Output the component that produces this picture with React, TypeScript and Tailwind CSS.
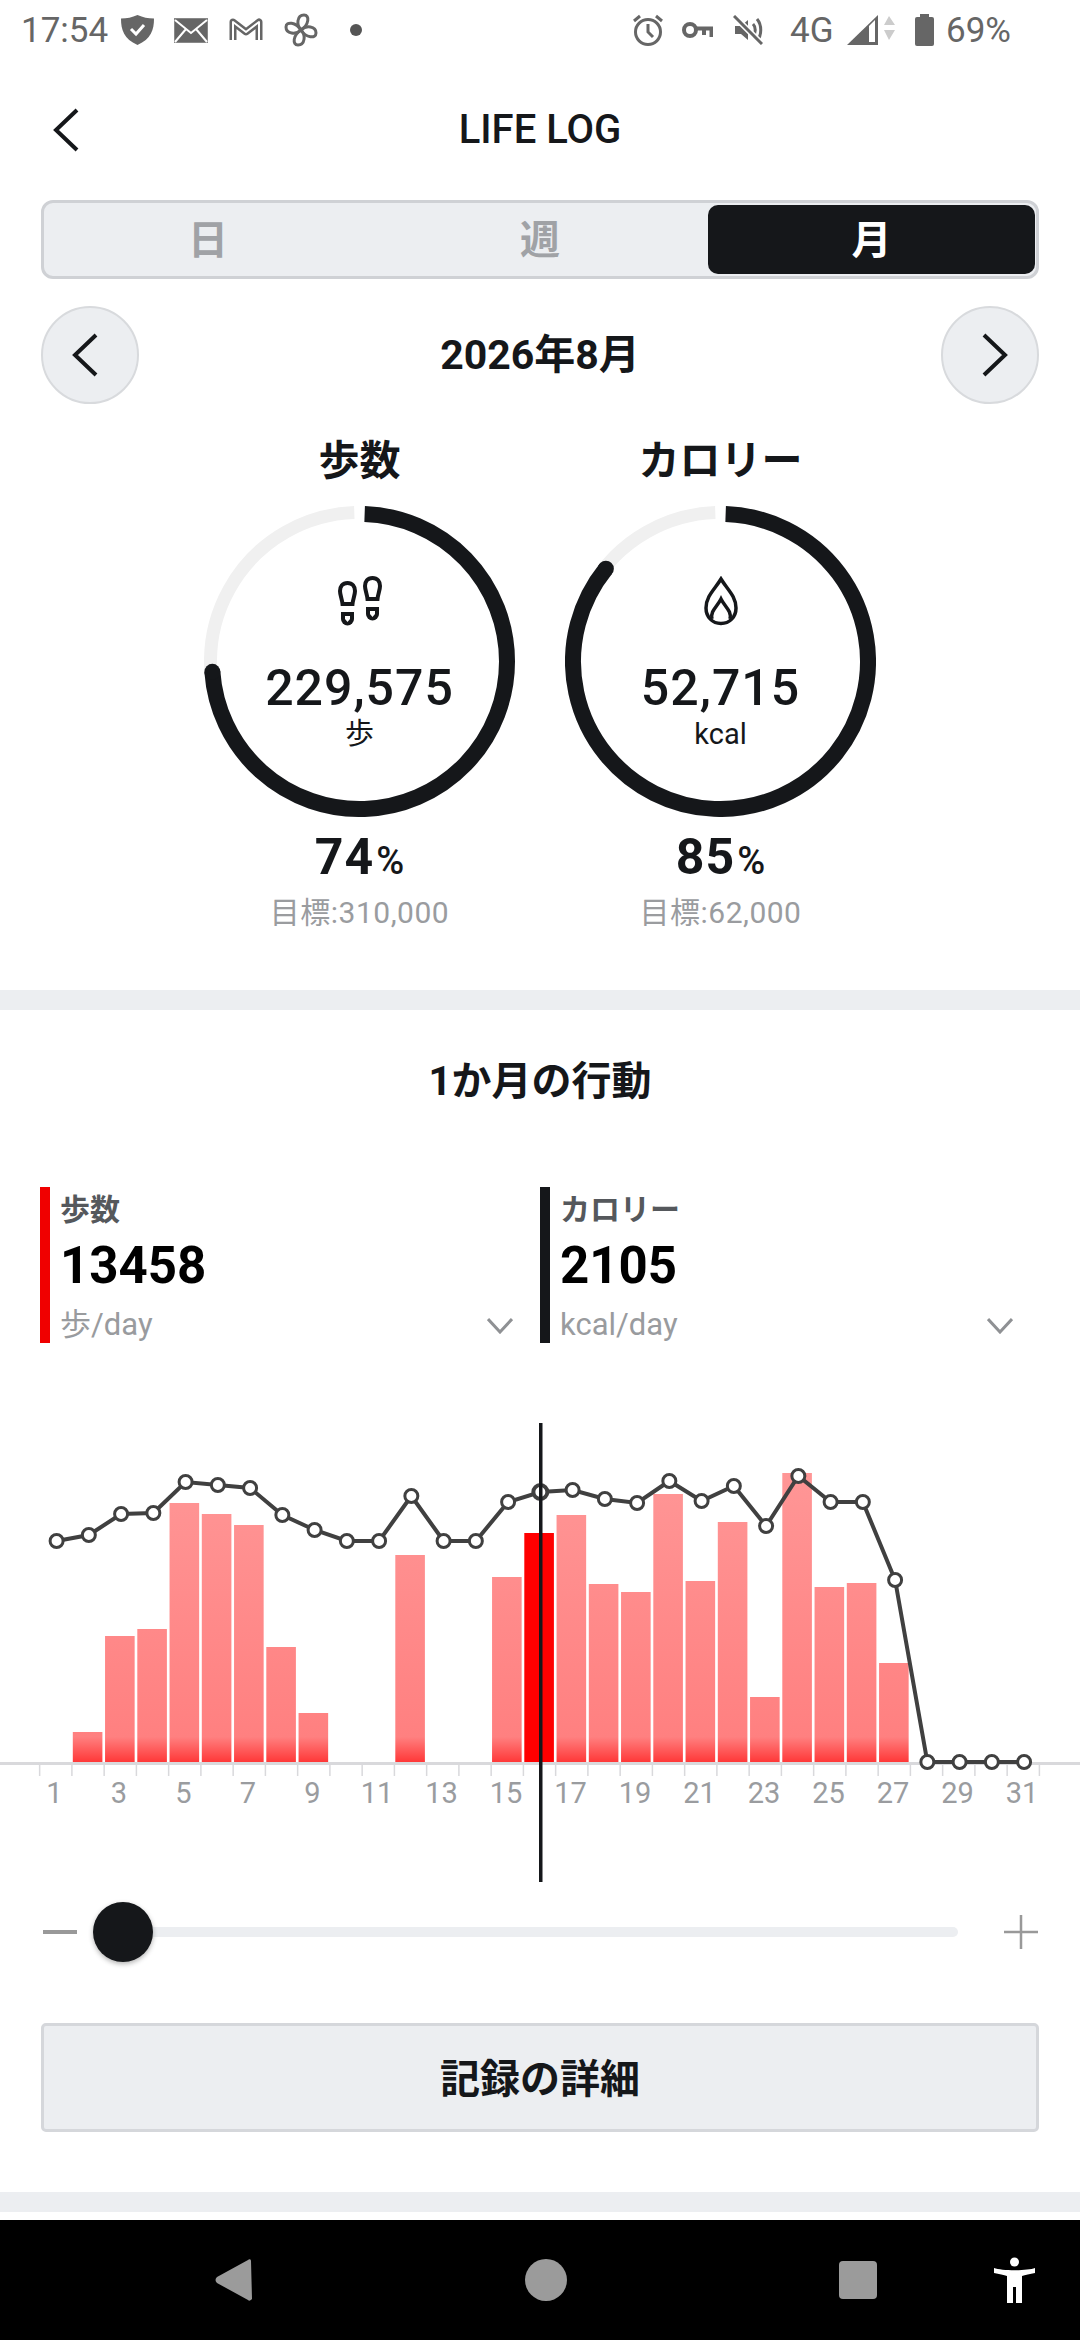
const barTops: Record<number, number> = {
  2: 1732, 3: 1636, 4: 1629, 5: 1503, 6: 1514, 7: 1525, 8: 1647, 9: 1713, 12: 1555, 15: 1577, 16: 1533,
  17: 1515, 18: 1584, 19: 1592, 20: 1494, 21: 1581, 22: 1522, 23: 1697, 24: 1473, 25: 1587, 26: 1583, 27: 1663,
}

const dotYs = [
  1541, 1535, 1514, 1513, 1482, 1485, 1488, 1515, 1530, 1541, 1541, 1496, 1541, 1541, 1502, 1492,
  1490, 1499, 1503, 1481, 1501, 1486, 1526, 1476, 1502, 1502, 1580, 1762, 1762, 1762, 1762,
]

const STEP = 32.25
const CHART_TOP = 1423

function polar(r: number, deg: number, c: number) {
  const a = ((deg - 90) * Math.PI) / 180
  return { x: c + r * Math.cos(a), y: c + r * Math.sin(a) }
}

function arc(r: number, from: number, to: number, c: number) {
  const s = polar(r, from, c)
  const e = polar(r, to, c)
  return `M${s.x} ${s.y} A${r} ${r} 0 ${to - from > 180 ? 1 : 0} 1 ${e.x} ${e.y}`
}

function Chevron({ dir, className }: { dir: 'left' | 'right'; className?: string }) {
  return (
    <svg viewBox="0 0 26 44" className={`w-[26px] h-[44px] ${className ?? ''}`} fill="none" stroke="#15171a" strokeWidth="4">
      <path d={dir === 'left' ? 'M24 2 L3 22 L24 42' : 'M2 2 L23 22 L2 42'} />
    </svg>
  )
}

function StatusBar() {
  return (
    <div className="h-[60px] relative flex items-center text-[#666] text-[35px]">
      <span className="ml-[21px] w-[100px] leading-none">17:54</span>
      <svg viewBox="0 0 33 30" className="w-[33px] h-[30px]">
        <path d="M16.5 0 C22 2.5 27 3.5 33 3.5 C33 15 30 24 16.5 30 C3 24 0 15 0 3.5 C6 3.5 11 2.5 16.5 0Z" fill="#666" />
        <path d="M10 14 L15 19 L23 10" fill="none" stroke="#fff" strokeWidth="3" />
      </svg>
      <svg viewBox="0 0 34 25" className="w-[34px] h-[25px] ml-[20px]">
        <rect x="0.5" y="0.5" width="33" height="24" fill="#666" stroke="#888" />
        <path d="M1 2 L17 15 L33 2 M1 24 L12 11 M33 24 L22 11" fill="none" stroke="#fff" strokeWidth="2" />
      </svg>
      <svg viewBox="0 0 34 26" className="w-[34px] h-[26px] ml-[21px]">
        <path d="M4 23 V5 L17 15 L30 5 V23" fill="none" stroke="#666" strokeWidth="7" strokeLinejoin="round" />
        <path d="M4 23 V5 L17 15 L30 5 V23" fill="none" stroke="#fff" strokeWidth="2" strokeLinejoin="round" />
      </svg>
      <svg viewBox="0 0 34 34" className="w-[34px] h-[34px] ml-[21px]" fill="none" stroke="#666" strokeWidth="3">
        <path d="M17 17 C12 12 13 2 20 2 C26 2 25 12 17 17Z" />
        <path d="M17 17 C22 12 32 13 32 20 C32 26 22 25 17 17Z" />
        <path d="M17 17 C22 22 21 32 14 32 C8 32 9 22 17 17Z" />
        <path d="M17 17 C12 22 2 21 2 14 C2 8 12 9 17 17Z" />
      </svg>
      <span className="ml-[32px] w-[12px] h-[12px] rounded-full bg-[#555]" />
      <svg viewBox="0 0 30 32" className="w-[30px] h-[32px] ml-[271px]" fill="none" stroke="#666" strokeWidth="3">
        <circle cx="15" cy="18" r="12.5" />
        <path d="M15 10 V18 L20 23" />
        <path d="M1 7 L7 2 M29 7 L23 2" />
      </svg>
      <svg viewBox="0 0 31 16" className="w-[31px] h-[16px] ml-[19px]" fill="none" stroke="#666" strokeWidth="4">
        <circle cx="8" cy="8" r="6" />
        <path d="M14 6.5 H29.5 V15 M22 6.5 V13" />
      </svg>
      <svg viewBox="0 0 30 30" className="w-[30px] h-[30px] ml-[20px]" fill="none" stroke="#666" strokeWidth="3">
        <path d="M2 11 H8 L15 5 V25 L8 19 H2Z" fill="#666" stroke="none" />
        <path d="M20 9 C23 12 23 18 20 21 M24 4 C29 10 29 20 24 26" />
        <path d="M1 1 L29 29" stroke="#fff" strokeWidth="6" />
        <path d="M1 1 L29 29" />
      </svg>
      <span className="ml-[27px] w-[50px] leading-none">4G</span>
      <svg viewBox="0 0 48 30" className="w-[48px] h-[30px] ml-[7px]">
        <path d="M31 0 V30 H0Z" fill="#666" />
        <path d="M22 11 L28 5 V27 H22Z" fill="#fff" />
        <path d="M42 1 L48 10 H37Z M37 15 H48 L42 25Z" fill="#ccc" />
      </svg>
      <svg viewBox="0 0 19 32" className="w-[19px] h-[32px] ml-[20px]">
        <rect x="5" y="0" width="9" height="4" fill="#666" />
        <rect x="0" y="3" width="19" height="29" rx="2" fill="#666" />
      </svg>
      <span className="ml-[12px] leading-none">69%</span>
    </div>
  )
}

function FootIcon() {
  const sole = 'M9.5 2 C14.5 2 17 5.5 17 10 C17 14 15 18 14.5 23 H4.5 C4 18 2 14 2 10 C2 5.5 4.5 2 9.5 2Z'
  const heel = 'M3 31 H16 V38 A6.5 6.5 0 0 1 3 38Z'
  const notch = 'M7 35 H12 V38 L9.5 41 L7 38Z'
  return (
    <svg viewBox="0 0 44 52" className="w-[44px] h-[52px]">
      {[
        [0, 5],
        [25, 0],
      ].map(([x, y]) => (
        <g key={x} transform={`translate(${x} ${y})`}>
          <path d={sole} fill="none" stroke="#15171a" strokeWidth="4" />
          <path d={heel} fill="#15171a" />
          <path d={notch} fill="#fff" />
        </g>
      ))}
    </svg>
  )
}

function FlameIcon() {
  return (
    <svg viewBox="0 0 34 52" className="w-[34px] h-[52px]" fill="none" stroke="#15171a" strokeWidth="3.5">
      <path d="M17 3 C23 13 32 20 32 32 C32 41 25.5 47.5 17 47.5 C8.5 47.5 2 41 2 32 C2 20 11 13 17 3Z" />
      <path d="M8 43 C6 35 13 31 17 23 C21 31 28 35 26 43" />
    </svg>
  )
}

function Ring({ title, end, icon, value, unit, pct, goal }: {
  title: string
  end: number
  icon: React.ReactNode
  value: string
  unit: string
  pct: string
  goal: string
}) {
  const c = 155.5
  const tip = polar(147.5, end, c)
  return (
    <div className="w-[311px] flex flex-col items-center">
      <h3 className="h-[60px] leading-[65px] text-[41px] font-bold text-[#15171a]">{title}</h3>
      <div className="mt-[17px] grid w-[311px] h-[311px]">
        <svg viewBox="0 0 311 311" className="[grid-area:1/1] w-[311px] h-[311px]" fill="none">
          <path d={arc(149, 2, 358, c)} stroke="#f0f0f0" strokeWidth="13" />
          <path d={arc(147.5, 2, end, c)} stroke="#15171a" strokeWidth="16" />
          <circle cx={tip.x} cy={tip.y} r="8" fill="#15171a" />
        </svg>
        <div className="[grid-area:1/1] flex flex-col items-center pt-[70px]">
          <div className="h-[52px] flex items-center">{icon}</div>
          <div className="mt-[35px] h-[50px] leading-[50px] text-[50px] font-medium tracking-[1px] text-[#15171a]">{value}</div>
          <div className="mt-[3px] h-[36px] leading-[36px] text-[29px] text-[#15171a]">{unit}</div>
        </div>
      </div>
      <div className="mt-[10px] h-[60px] leading-[60px] font-bold text-[#15171a] text-[50px] tracking-[1px]">
        {pct}
        <span className="text-[38px] font-medium tracking-normal ml-[2px]">%</span>
      </div>
      <div className="mt-[6px] h-[40px] leading-[40px] text-[30px] text-[#9a9c9f] tracking-[0.5px]">{goal}</div>
    </div>
  )
}

function LegendItem({ color, label, value, unit }: { color: string; label: string; value: string; unit: string }) {
  return (
    <div className="flex h-[156px]">
      <div className={`w-[10px] h-full ${color}`} />
      <div className="ml-[10px] flex-1 flex flex-col">
        <div className="mt-[5px] h-[36px] leading-[36px] text-[30px] font-bold text-[#55585c]">{label}</div>
        <div className="mt-[10px] h-[56px] leading-[56px] text-[51px] font-bold text-black">{value}</div>
        <div className="mt-[13px] h-[36px] leading-[36px] text-[31px] text-[#999b9e]">{unit}</div>
      </div>
      <svg viewBox="0 0 26 16" className="w-[26px] h-[16px] self-end mb-[9px] mr-[27px]" fill="none" stroke="#8f9194" strokeWidth="3">
        <path d="M1 1 L13 14 L25 1" />
      </svg>
    </div>
  )
}

function Chart() {
  const y = (v: number) => v - CHART_TOP
  const dx = (d: number) => 56.6 + STEP * (d - 1)
  const points = dotYs.map((v, i) => `${dx(i + 1)},${y(v)}`).join(' ')
  return (
    <svg viewBox="0 0 1080 459" className="w-[1080px] h-[459px] block">
      <defs>
        <linearGradient id="barFill" gradientUnits="userSpaceOnUse" x1="0" y1={y(1473)} x2="0" y2={y(1763)}>
          <stop offset="0" stopColor="#ff9696" />
          <stop offset="0.91" stopColor="#ff8080" />
          <stop offset="1" stopColor="#ff3535" />
        </linearGradient>
      </defs>
      <rect x="0" y={y(1762)} width="1080" height="3" fill="#d9d9dc" />
      {Array.from({ length: 32 }, (_, i) => (
        <rect key={i} x={38.9 + STEP * i} y={y(1764)} width="1.5" height="12" fill="#d9d9dc" />
      ))}
      {Object.entries(barTops).map(([d, top]) => (
        <rect
          key={d}
          x={72.8 + STEP * (Number(d) - 2)}
          y={y(top)}
          width="29.6"
          height={1762 - top}
          fill={d === '16' ? '#ff0000' : 'url(#barFill)'}
        />
      ))}
      {Array.from({ length: 16 }, (_, i) => i * 2 + 1).map((d) => (
        <text key={d} x={54.5 + STEP * (d - 1)} y={y(1803)} textAnchor="middle" className="text-[29px] fill-[#9a9c9f]">
          {d}
        </text>
      ))}
      <polyline points={points} fill="none" stroke="#404040" strokeWidth="4" />
      {dotYs.map((v, i) =>
        i === 15 ? null : <circle key={i} cx={dx(i + 1)} cy={y(v)} r="6.5" fill="#fff" stroke="#404040" strokeWidth="3" />
      )}
      <circle cx={dx(16)} cy={y(dotYs[15])} r="7" fill="#fff" stroke="#404040" strokeWidth="4" />
      <rect x="539" y="0" width="3.5" height="459" fill="#15171a" />
    </svg>
  )
}

function NavBar() {
  return (
    <div className="mt-auto h-[120px] bg-black relative flex items-center">
      <svg viewBox="0 0 38 42" className="w-[38px] h-[42px] ml-[215px]">
        <path d="M36 2 L37 40 C35 42 34 42 33 41 L2 24 C0 22 0 20 2 18 L33 1 C34 0 36 0 36 2Z" fill="#9b9b9b" />
      </svg>
      <div className="w-[42px] h-[42px] ml-[272px] rounded-full bg-[#9b9b9b]" />
      <div className="w-[38px] h-[38px] ml-[272px] rounded-[4px] bg-[#9b9b9b]" />
      <svg viewBox="0 0 41 46" className="w-[41px] h-[46px] ml-[117px]" fill="#fff">
        <circle cx="20.5" cy="5" r="4.5" />
        <path d="M0 11 C8 14 33 14 41 11 V16 C36 17 31 18 28 19 V46 H22 V30 H19 V46 H13 V19 C10 18 5 17 0 16Z" />
      </svg>
    </div>
  )
}

export default function App() {
  return (
    <div className="w-[1080px] h-[2340px] bg-white overflow-hidden flex flex-col font-['Roboto','Noto_Sans_CJK_JP',sans-serif]">
      <StatusBar />

      <header className="h-[140px] relative flex items-center justify-center">
        <Chevron dir="left" className="absolute left-[53px] top-[48px]" />
        <h1 className="text-[40px] font-medium text-[#15171a]">LIFE LOG</h1>
      </header>

      <div className="mx-[41px] h-[79px] rounded-[12px] border-[3px] border-[#cfd1d5] bg-[#eceef1] flex text-[40px] font-bold text-[#a0a2a6]">
        <div className="w-[328px] pt-[3px] flex items-center justify-center">日</div>
        <div className="w-[336px] pt-[3px] flex items-center justify-center">週</div>
        <div className="flex-1 my-[2px] mr-[1px] pt-[3px] rounded-[10px] bg-[#15171a] text-white flex items-center justify-center">月</div>
      </div>

      <div className="mt-[26px] mx-[41px] h-[100px] flex items-center justify-between">
        <button className="w-[98px] h-[98px] pr-[10px] rounded-full bg-[#eceef1] border-2 border-[#d8dadd] flex items-center justify-center">
          <Chevron dir="left" />
        </button>
        <div className="text-[41px] pt-[2px] font-bold text-[#15171a]">2026年8月</div>
        <button className="w-[98px] h-[98px] pl-[10px] rounded-full bg-[#eceef1] border-2 border-[#d8dadd] flex items-center justify-center">
          <Chevron dir="right" />
        </button>
      </div>

      <section className="mt-[24px] flex justify-center gap-[50px]">
        <Ring title="歩数" end={266} icon={<FootIcon />} value="229,575" unit="歩" pct="74" goal="目標:310,000" />
        <Ring title="カロリー" end={309} icon={<FlameIcon />} value="52,715" unit="kcal" pct="85" goal="目標:62,000" />
      </section>

      <div className="mt-[57px] h-[20px] bg-[#eceef1]" />

      <h2 className="mt-[40px] h-[60px] leading-[63px] text-center text-[40px] font-bold text-[#15171a]">1か月の行動</h2>

      <div className="mt-[77px] pl-[40px] grid grid-cols-[500px_500px]">
        <LegendItem color="bg-[#f00000]" label="歩数" value="13458" unit="歩/day" />
        <LegendItem color="bg-[#15171a]" label="カロリー" value="2105" unit="kcal/day" />
      </div>

      <div className="mt-[80px]">
        <Chart />
      </div>

      <div className="mt-[20px] h-[60px] flex items-center pl-[43px]">
        <div className="w-[34px] h-[4px] bg-[#999]" />
        <div className="relative ml-[16px] w-[865px] h-[10px] rounded-full bg-[#eceef1]">
          <div className="absolute left-0 top-[-25px] w-[60px] h-[60px] rounded-full bg-[#15171a] shadow-[0_2px_5px_rgba(0,0,0,0.3)]" />
        </div>
        <svg viewBox="0 0 34 34" className="w-[34px] h-[34px] ml-[46px]" stroke="#999" strokeWidth="2.5">
          <path d="M0 17 H34 M17 0 V34" />
        </svg>
      </div>

      <button className="mt-[61px] mx-[41px] h-[109px] pt-[4px] rounded-[5px] border-[3px] border-[#d5d7db] bg-[#eceef1] text-[40px] font-bold text-[#15171a]">
        記録の詳細
      </button>

      <div className="mt-[60px] h-[20px] bg-[#eceef1]" />

      <NavBar />
    </div>
  )
}
